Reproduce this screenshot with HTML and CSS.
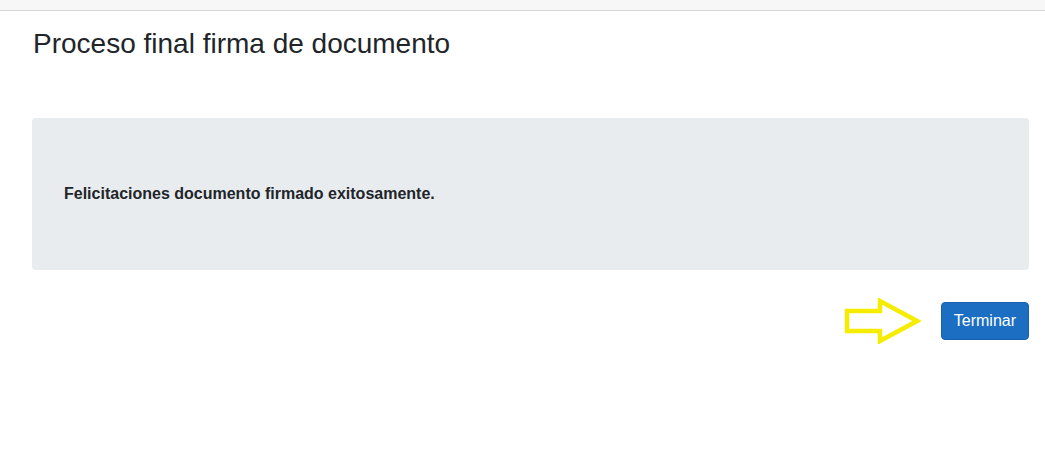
FILE: index.html
```html
<!DOCTYPE html>
<html lang="es">
<head>
<meta charset="utf-8">
<title>Proceso final firma de documento</title>
<link rel="stylesheet" href="styles.css">
</head>
<body>
<header class="topbar"></header>
<main class="page">
  <h3 class="title">Proceso final firma de documento</h3>
  <section class="jumbotron">
    <p class="message">Felicitaciones documento firmado exitosamente.</p>
  </section>
  <div class="actions">
    <svg class="arrow" width="78" height="46" viewBox="0 0 78 46" aria-hidden="true">
      <polygon points="4,13 37,13 37,3 74,23 37,43 37,33 4,33" fill="none" stroke="#f6ec00" stroke-width="4.5" stroke-linejoin="miter"/>
    </svg>
    <button class="btn-primary" type="button">Terminar</button>
  </div>
</main>
</body>
</html>
```

FILE: styles.css
```css
html, body {
  margin: 0;
  padding: 0;
  background: #ffffff;
}

body {
  font-family: "Liberation Sans", Arial, sans-serif;
  color: #212529;
  font-size: 16px;
  line-height: 1.5;
}

.topbar {
  height: 10px;
  background: #f7f7f7;
  border-bottom: 1px solid #d8d8d8;
}

.page {
  padding: 0 16px 0 32px;
}

.title {
  margin: 16px 0 0 1px;
  font-size: 28px;
  font-weight: 400;
  line-height: 1.2;
  color: #212529;
}

.jumbotron {
  margin-top: 57px;
  background: #e9ecef;
  border-radius: 4px;
  padding: 64px 32px;
}

.message {
  margin: 0;
  font-weight: 700;
  font-size: 16px;
  line-height: 24px;
}

.actions {
  margin-top: 32px;
  display: flex;
  justify-content: flex-end;
  align-items: flex-start;
  gap: 20px;
}

.arrow {
  display: block;
  margin-top: -4px;
}

.btn-primary {
  font-family: "Liberation Sans", Arial, sans-serif;
  font-size: 16px;
  line-height: 24px;
  padding: 6px 12px;
  color: #ffffff;
  background: #1b6ec2;
  border: 1px solid #1861ac;
  border-radius: 4px;
  cursor: pointer;
}
```
